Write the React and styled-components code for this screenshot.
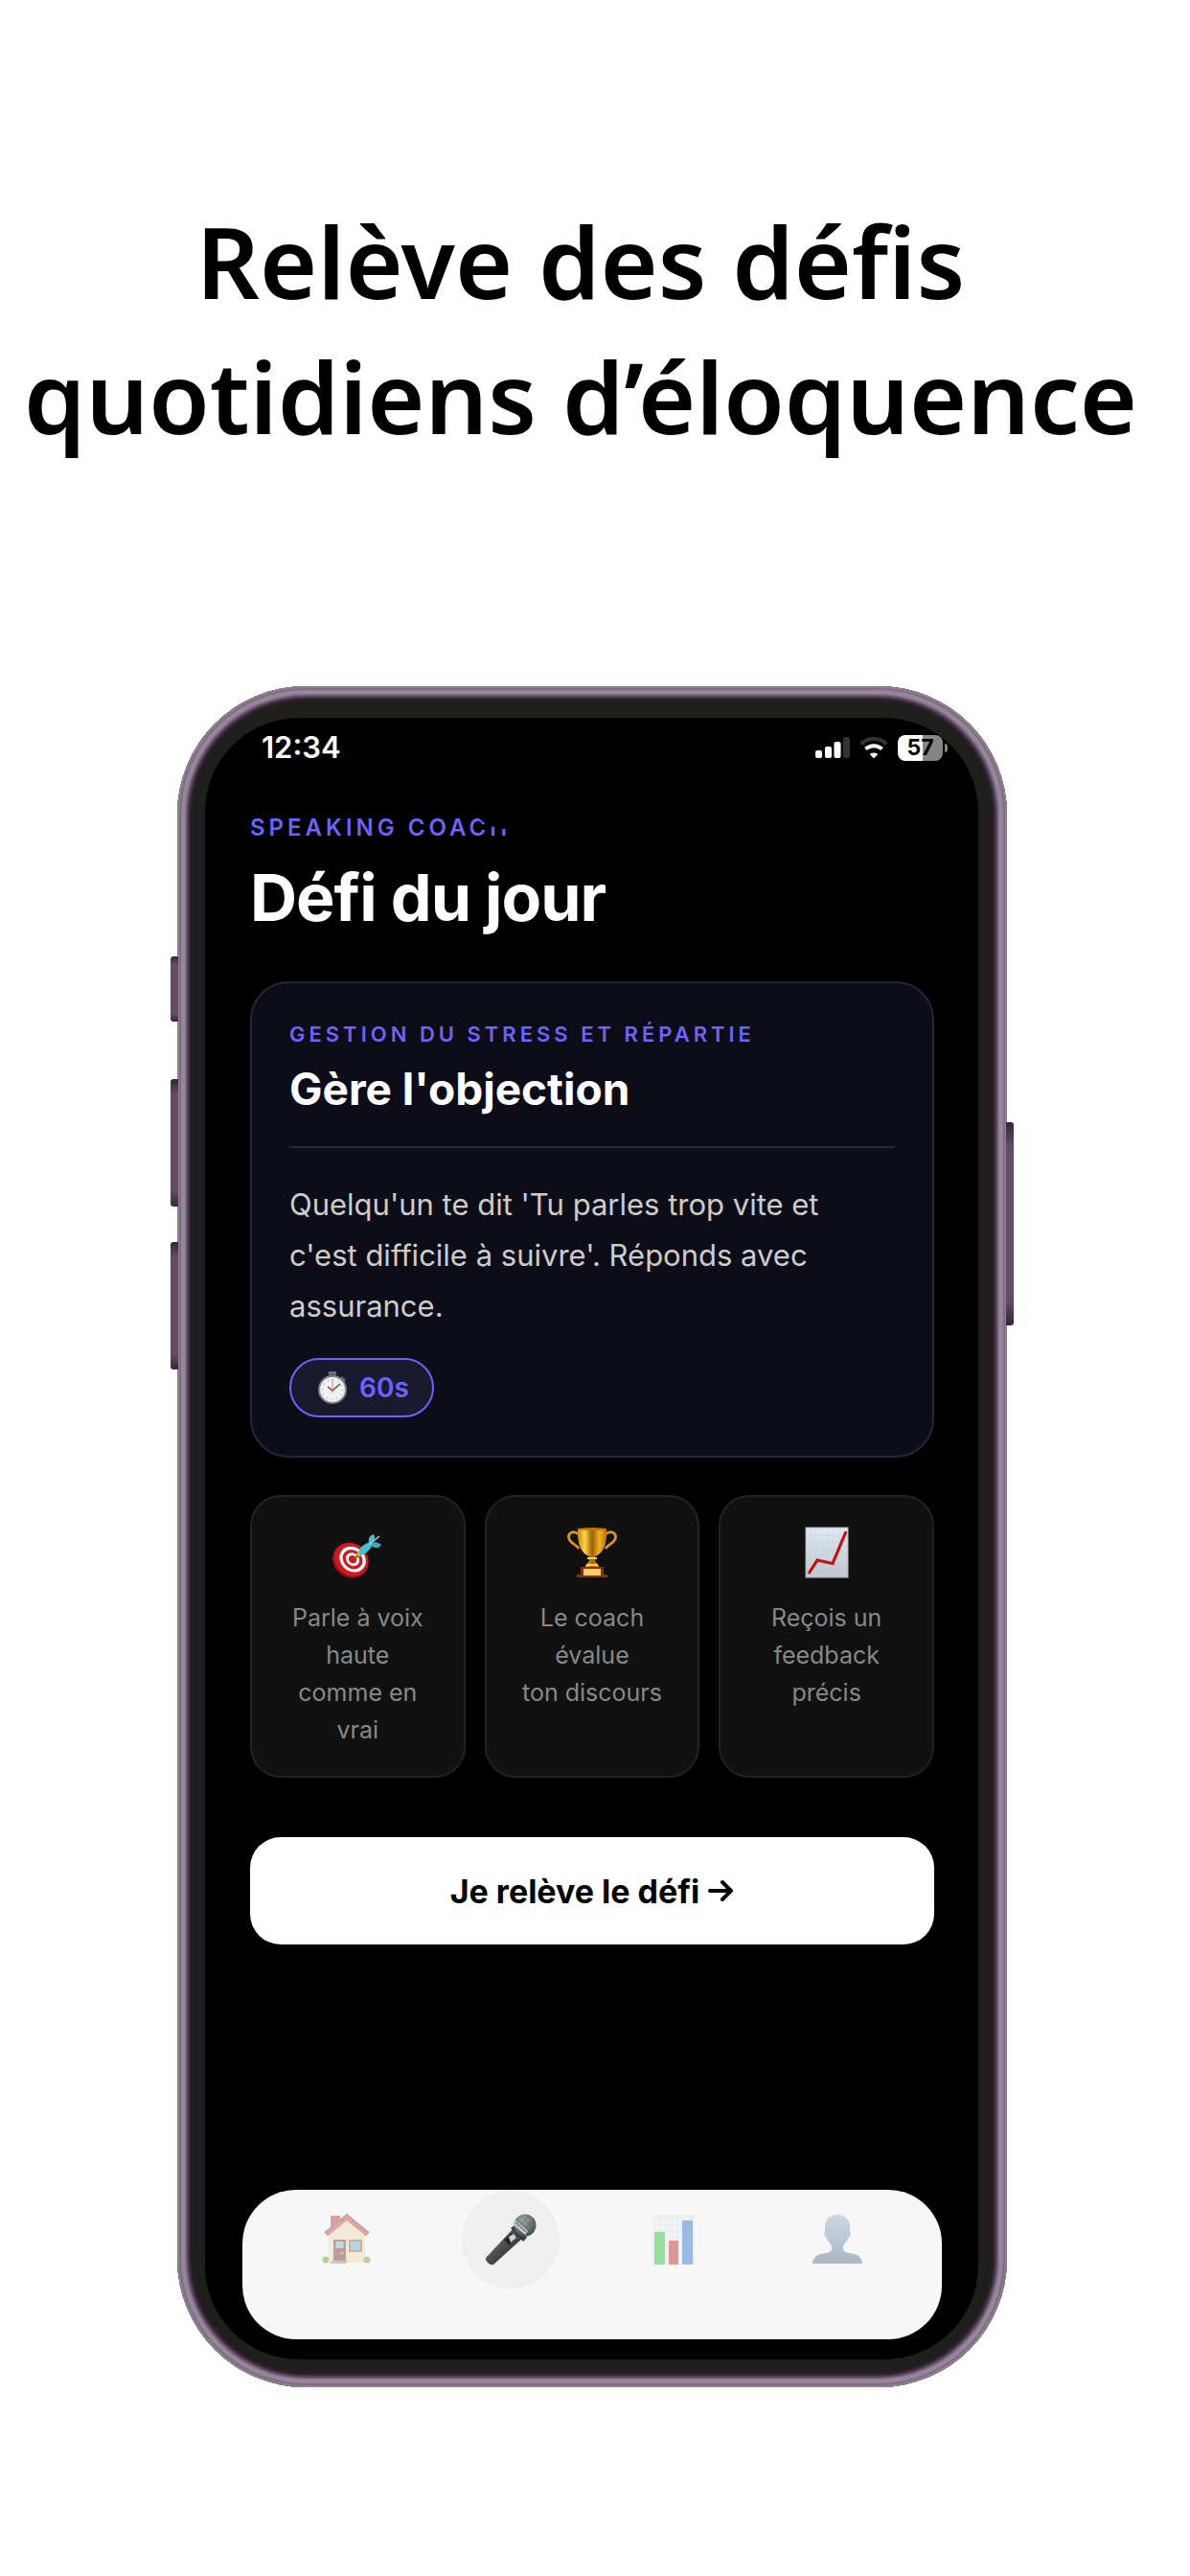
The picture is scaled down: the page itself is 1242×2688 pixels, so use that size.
import React, { useState } from "react";
import styled, { createGlobalStyle } from "styled-components";

const steps = [
  { id: "speak", icon: <TargetIcon />, lines: ["Parle à voix haute", "comme en vrai"] },
  { id: "coach", icon: <TrophyIcon />, lines: ["Le coach évalue", "ton discours"] },
  { id: "feedback", icon: <GrowthIcon />, lines: ["Reçois un feedback", "précis"] },
];

const tabs = [
  { id: "home", label: "Accueil", icon: <HouseIcon /> },
  { id: "challenge", label: "Défi", icon: <MicIcon /> },
  { id: "stats", label: "Statistiques", icon: <BarsIcon /> },
  { id: "profile", label: "Profil", icon: <PersonIcon /> },
];

const App = () => {
  const [activeTab, setActiveTab] = useState("challenge");

  return (
    <Page>
      <GlobalStyle />
      <Headline>
        Relève des défis
        <br />
        quotidiens d’éloquence
      </Headline>

      <Phone>
        <SideKey side="left" top={282} size={68} />
        <SideKey side="left" top={410} size={133} />
        <SideKey side="left" top={580} size={133} />
        <SideKey side="right" top={455} size={212} />

        <Screen>
          <Island />
          <StatusBar>
            <Clock>12:34</Clock>
            <StatusIcons>
              <SignalIcon />
              <WifiIcon />
              <Battery>
                <BatteryBody>57</BatteryBody>
                <BatteryNub />
              </Battery>
            </StatusIcons>
          </StatusBar>

          <Content>
            <Eyebrow>SPEAKING COACH</Eyebrow>
            <Title>Défi du jour</Title>

            <Card>
              <Category>GESTION DU STRESS ET RÉPARTIE</Category>
              <CardTitle>Gère l'objection</CardTitle>
              <Divider />
              <Prompt>
                Quelqu'un te dit 'Tu parles trop vite et c'est difficile à suivre'. Réponds avec
                assurance.
              </Prompt>
              <Duration>
                <StopwatchIcon />
                60s
              </Duration>
            </Card>

            <Steps>
              {steps.map((step) => (
                <Step key={step.id}>
                  {step.icon}
                  <StepText>
                    {step.lines[0]}
                    <br />
                    {step.lines[1]}
                  </StepText>
                </Step>
              ))}
            </Steps>

            <StartButton type="button">
              Je relève le défi
              <ArrowIcon />
            </StartButton>
          </Content>

          <TabBar>
            {tabs.map((tab) => (
              <TabSlot key={tab.id}>
                <Tab
                  type="button"
                  aria-label={tab.label}
                  $active={tab.id === activeTab}
                  onClick={() => setActiveTab(tab.id)}
                >
                  {tab.icon}
                </Tab>
              </TabSlot>
            ))}
          </TabBar>
        </Screen>
      </Phone>
    </Page>
  );
};

export default App;

function SideKey({ side, top, size }) {
  return <Key $side={side} $top={top} $size={size} />;
}

function SignalIcon() {
  return (
    <svg width="36" height="22" viewBox="0 0 36 22" fill="#fff">
      <rect x="0" y="14" width="7" height="8" rx="2" />
      <rect x="10" y="10" width="7" height="12" rx="2" />
      <rect x="19.500" y="5" width="7" height="17" rx="2" />
      <rect x="29" y="0" width="7" height="22" rx="2" fill="#333" />
    </svg>
  );
}

function WifiIcon() {
  return (
    <svg width="30" height="22" viewBox="0 0 30 22" fill="none" strokeWidth="4">
      <path d="M1.500 7.500C9 .300 21 .300 28.500 7.500" stroke="#333" />
      <path d="M6.500 12.500C11.500 8 18.500 8 23.500 12.500" stroke="#fff" />
      <path d="M15 22.500l-4.200-4.600c2.400-2 6-2 8.400 0z" fill="#fff" />
    </svg>
  );
}

function StopwatchIcon() {
  return (
    <svg width="32" height="36" viewBox="0 0 32 36">
      <rect x="12" y="1" width="8" height="4" rx="1" fill="#6d747b" />
      <rect x="14" y="4" width="4" height="4" fill="#41474e" />
      <path d="M26 6l4 4-2 2-4-4z" fill="#5d646c" />
      <circle cx="16" cy="20" r="15" fill="#7d858d" />
      <circle cx="16" cy="20" r="13" fill="#f1f1ef" />
      <circle cx="16" cy="20" r="10.500" fill="none" stroke="#aaa" strokeWidth="1.500" strokeDasharray="1 4.500" />
      <path d="M16 21V9" stroke="#e6917c" strokeWidth="1.200" />
      <path d="M11 17l5 4 8-7" fill="none" stroke="#50555b" strokeWidth="1.600" />
      <circle cx="16" cy="21" r="1.500" fill="#d9775f" />
    </svg>
  );
}

function ArrowIcon() {
  return (
    <svg width="28" height="26" viewBox="0 0 28 26" fill="none" stroke="#000" strokeWidth="4" strokeLinecap="round" strokeLinejoin="round">
      <path d="M3 13h22M16 4l9 9-9 9" />
    </svg>
  );
}

function TargetIcon() {
  return (
    <svg width="54" height="54" viewBox="0 0 54 54">
      <g transform="rotate(40 20 35)">
        <ellipse cx="20" cy="36" rx="19.500" ry="17" fill="#8f0d12" />
        <ellipse cx="20" cy="34" rx="19" ry="16.500" fill="#cf1820" />
        <ellipse cx="21" cy="33" rx="14.500" ry="12.500" fill="#fff" />
        <ellipse cx="21" cy="33" rx="11" ry="9.500" fill="#cf1820" />
        <ellipse cx="21" cy="33" rx="7.500" ry="6.500" fill="#fff" />
        <ellipse cx="21" cy="33" rx="4.500" ry="4" fill="#cf1820" />
      </g>
      <path d="M22 34l6-6 3 3z" fill="#8d6a12" />
      <path d="M26 29l3-4 4 4-4 2z" fill="#f2c81e" />
      <path d="M28 27c1-6 7-9 12-11l3 3c-3 5-7 10-13 11z" fill="#3cc3d6" />
      <path d="M39 17c-1-5 1-8 5-9 2 3 1 7-2 10z" fill="#58b9c6" />
      <path d="M41 18c3-3 8-2 11 1-2 4-7 4-11 1z" fill="#3fa6b5" />
      <path d="M39 19l11-9" stroke="#7cdbe6" strokeWidth="1.600" />
    </svg>
  );
}

function TrophyIcon() {
  return (
    <svg width="54" height="54" viewBox="0 0 54 54">
      <defs>
        <linearGradient id="cup" x1="0" x2="1">
          <stop offset="0" stopColor="#c78408" />
          <stop offset=".25" stopColor="#ffd34a" />
          <stop offset=".5" stopColor="#9a6204" />
          <stop offset=".75" stopColor="#f2b21c" />
          <stop offset="1" stopColor="#b87305" />
        </linearGradient>
      </defs>
      <path d="M13 8C7 3 1 7 3 13c2 5 8 6 10 10M41 8c6-5 12-1 10 5-2 5-8 6-10 10" fill="none" stroke="#d9981a" strokeWidth="2.800" />
      <path d="M12 2h30c1 15-3 26-12 29v5l4 5v3H20v-3l4-5v-5C15 28 11 17 12 2z" fill="url(#cup)" />
      <ellipse cx="27" cy="2.500" rx="15" ry="1.500" fill="#b97908" />
      <path d="M22 33h10M21 40h12" stroke="#ffd34a" strokeWidth="2" />
      <path d="M15 42h24v8h4v3H11v-3h4z" fill="#8a3206" />
      <rect x="18" y="44" width="18" height="7" fill="#f7cf62" />
    </svg>
  );
}

function GrowthIcon() {
  return (
    <svg width="54" height="54" viewBox="0 0 54 54">
      <defs>
        <linearGradient id="paper" x1="0" x2="0" y1="0" y2="1">
          <stop offset="0" stopColor="#dfe9f3" />
          <stop offset="1" stopColor="#bfc6cd" />
        </linearGradient>
      </defs>
      <rect x="5" y="1" width="44" height="52" fill="url(#paper)" stroke="#aab4bd" />
      <path d="M10 2v50M16 2v50M22 2v50M28 2v50M34 2v50M40 2v50M6 9h42M6 16h42M6 23h42M6 30h42M6 37h42M6 44h42" stroke="#c3d1de" strokeWidth=".500" />
      <path d="M8 49l9-14 16 3.500L47 5" fill="none" stroke="#c90d10" strokeWidth="3.200" />
    </svg>
  );
}

function HouseIcon() {
  return (
    <svg width="54" height="54" viewBox="0 0 54 54">
      <rect x="10" y="2" width="10" height="18" fill="#c4493f" />
      <path d="M8 22L27 6l19 16v29H8z" fill="#f3e0b8" />
      <path d="M4 20L27 1l23 19-3 3.500L27 7 7 23.500z" fill="#dc4b49" />
      <path d="M4 20L27 1l23 19" fill="none" stroke="#67686b" strokeWidth="2" />
      <rect x="13" y="27" width="13" height="23" fill="#7e4938" />
      <rect x="15.500" y="29" width="8" height="7" fill="#83bfe2" />
      <circle cx="22" cy="41" r="1.300" fill="#e8bd55" />
      <rect x="29" y="27" width="14" height="13" fill="#9b6f58" />
      <rect x="31" y="29" width="10" height="9" fill="#76b5df" />
      <circle cx="5" cy="48" r="3.500" fill="#7aa641" />
      <circle cx="48" cy="48" r="3.500" fill="#7aa641" />
      <path d="M11 49h16v3H9z" fill="#9a9a9a" />
    </svg>
  );
}

function MicIcon() {
  return (
    <svg width="54" height="54" viewBox="0 0 54 54">
      <defs>
        <linearGradient id="handle" x1="0" x2="1" y1="0" y2="1">
          <stop offset="0" stopColor="#7b7d7c" />
          <stop offset=".5" stopColor="#4b4c4c" />
          <stop offset="1" stopColor="#151515" />
        </linearGradient>
        <radialGradient id="grille" cx=".4" cy=".3" r=".8">
          <stop offset="0" stopColor="#a4aaa9" />
          <stop offset="1" stopColor="#3b4040" />
        </radialGradient>
      </defs>
      <path d="M1 46L30 15l10 10L9 53q-3 1-6-2t-2-5z" fill="url(#handle)" />
      <path d="M27 15l4-3 13 13-4 4z" fill="#3c3e3e" />
      <circle cx="42" cy="12" r="11.500" fill="url(#grille)" />
      <path d="M34 6l16 15M38 3l14 13M32 11l12 12M32 17L46 2M36 21L52 6M42 23l11-11" stroke="#5d6363" strokeWidth=".700" />
      <path d="M31 6l14 12-3 4-13-11z" fill="#c5cbd3" />
      <path d="M32 9l11 10" stroke="#747b85" strokeWidth="1.500" />
      <path d="M20 27l8-7 5 5-8 8z" fill="#262626" />
      <path d="M25 24l5-3 3 4-6 5z" fill="#cfcfcf" />
    </svg>
  );
}

function BarsIcon() {
  return (
    <svg width="54" height="54" viewBox="0 0 54 54">
      <rect x="5" y="1" width="44" height="52" fill="#dfe8ed" />
      <path d="M10 1v52M16 1v52M22 1v52M28 1v52M34 1v52M40 1v52M5 8h44M5 15h44M5 22h44M5 29h44M5 36h44M5 43h44" stroke="#f6f8fa" />
      <rect x="7" y="19" width="11" height="34" fill="#39cb46" />
      <rect x="22" y="28" width="10" height="25" fill="#cb393d" />
      <rect x="36" y="7" width="11" height="46" fill="#3b7fd0" />
    </svg>
  );
}

function PersonIcon() {
  return (
    <svg width="54" height="54" viewBox="0 0 54 54">
      <defs>
        <linearGradient id="bust" x1="0" x2="0" y1="0" y2="1">
          <stop offset="0" stopColor="#9bbace" />
          <stop offset="1" stopColor="#5e7a92" />
        </linearGradient>
      </defs>
      <path d="M27 1c8 0 13 5 13 12v5c2 2 0 6-2 8-2 4-4 5-5 8v3c1 4 7 4 12 5 5 2 8 5 8 10H1c0-5 3-8 8-10 5-1 11-1 12-5v-3c-1-3-3-4-5-8-2-2-4-6-2-8v-5C14 6 19 1 27 1z" fill="url(#bust)" />
    </svg>
  );
}

const GlobalStyle = createGlobalStyle`
  *, *::before, *::after {
    box-sizing: border-box;
  }
  body {
    margin: 0;
    background: #fff;
    font-family: Inter, "Liberation Sans", sans-serif;
  }
  h1, h2, h3, p {
    margin: 0;
  }
  svg {
    flex-shrink: 0;
  }
`;

const Page = styled.main`
  display: flex;
  flex-direction: column;
  align-items: center;
  gap: 232px;
  padding: 202px 6px 197px 0;
`;

const Headline = styled.h1`
  font-family: "Noto Sans", "Open Sans", sans-serif;
  font-size: 103px;
  line-height: 141px;
  font-weight: 600;
  color: #000;
  text-align: center;
  white-space: nowrap;
  margin-right: 24px;
`;

const Phone = styled.section`
  position: relative;
  display: flex;
  width: 72%;
  max-width: 866px;
  min-height: 1775px;
  padding: 33px 30px 29px 29px;
  border-radius: 134px;
  background: #1f1f1b;
  box-shadow: inset 0 0 0 2px #8d808f, inset 0 0 1px 4px #7e6c81,
    inset 0 0 2px 9px #98869c, inset 0 0 3px 12px #65506a,
    inset 0 0 4px 15px #2b202c;
`;

const Key = styled.span`
  position: absolute;
  top: ${({ $top }) => $top}px;
  ${({ $side }) => $side}: -7px;
  width: 8px;
  height: ${({ $size }) => $size}px;
  border-radius: ${({ $side }) => ($side === "left" ? "3px 0 0 3px" : "0 3px 3px 0")};
  background: linear-gradient(#35243a, #634c64 12%, #634c64 88%, #35243a);
`;

const Screen = styled.div`
  position: relative;
  display: flex;
  flex-direction: column;
  flex: 1;
  border-radius: 98px;
  background: #000;
`;

const Island = styled.div`
  position: absolute;
  top: 44px;
  left: 50%;
  width: 256px;
  height: 72px;
  margin-left: -128px;
  border-radius: 36px;
  background: #000;
`;

const StatusBar = styled.header`
  display: flex;
  align-items: center;
  justify-content: space-between;
  height: 62px;
  padding: 0 32px 0 59px;
  color: #fff;
`;

const Clock = styled.time`
  font-size: 31px;
  line-height: 36px;
  font-weight: 600;
`;

const StatusIcons = styled.div`
  display: flex;
  align-items: center;
  gap: 10px;
`;

const Battery = styled.div`
  display: flex;
  align-items: center;
  gap: 2px;
`;

const BatteryBody = styled.span`
  width: 47px;
  height: 27px;
  border-radius: 8px;
  background: linear-gradient(90deg, #fff 56%, #858585 56%);
  color: #000;
  font-size: 23px;
  line-height: 27px;
  font-weight: 700;
  text-align: center;
`;

const BatteryNub = styled.span`
  width: 3px;
  height: 9px;
  border-radius: 0 3px 3px 0;
  background: #858585;
`;

const Content = styled.div`
  display: flex;
  flex-direction: column;
  padding: 39px 46px 0 47px;
`;

const Eyebrow = styled.p`
  font-size: 24px;
  line-height: 28px;
  font-weight: 600;
  letter-spacing: 4px;
  color: #6c63ff;
`;

const Title = styled.h2`
  margin-top: 18px;
  font-size: 68px;
  line-height: 80px;
  font-weight: 700;
  letter-spacing: -1px;
  color: #fff;
`;

const Card = styled.article`
  display: flex;
  flex-direction: column;
  margin-top: 48px;
  padding: 40px 39px;
  border: 2px solid #262540;
  border-radius: 40px;
  background: #0d0d18;
`;

const Category = styled.p`
  font-size: 22px;
  line-height: 26px;
  font-weight: 600;
  letter-spacing: 4px;
  color: #6c63ff;
`;

const CardTitle = styled.h3`
  margin-top: 16px;
  font-size: 46px;
  line-height: 56px;
  font-weight: 700;
  color: #fff;
`;

const Divider = styled.hr`
  width: 100%;
  margin: 32px 0;
  border: 0;
  border-top: 2px solid #262540;
`;

const Prompt = styled.p`
  padding-right: 24px;
  font-size: 31px;
  line-height: 53px;
  color: #ccc;
`;

const Duration = styled.span`
  display: flex;
  align-items: center;
  align-self: flex-start;
  gap: 12px;
  height: 62px;
  margin-top: 28px;
  padding: 0 24px 0 27px;
  border: 2px solid #6c63ff;
  border-radius: 31px;
  background: #1a1a2e;
  color: #6c63ff;
  font-size: 28px;
  font-weight: 600;
`;

const Steps = styled.div`
  display: grid;
  grid-template-columns: repeat(3, 1fr);
  gap: 20px;
  margin-top: 39px;
`;

const Step = styled.div`
  display: flex;
  flex-direction: column;
  align-items: center;
  gap: 22px;
  padding: 31px 28px 28px;
  border: 2px solid #222;
  border-radius: 32px;
  background: #111;
`;

const StepText = styled.p`
  font-size: 25px;
  line-height: 39px;
  color: #888;
  text-align: center;
`;

const StartButton = styled.button`
  display: flex;
  align-items: center;
  justify-content: center;
  gap: 8px;
  height: 112px;
  margin-top: 62px;
  border: 0;
  border-radius: 32px;
  background: #fff;
  color: #000;
  font-family: inherit;
  font-size: 34px;
  font-weight: 700;
`;

const TabBar = styled.nav`
  display: flex;
  height: 156px;
  margin: auto 38px 21px 39px;
  padding: 1px 24px;
  border-radius: 56px;
  background: #f7f7f7;
`;

const TabSlot = styled.div`
  display: flex;
  flex: 1;
  justify-content: center;
`;

const Tab = styled.button`
  display: flex;
  align-items: center;
  justify-content: center;
  width: 102px;
  height: 102px;
  padding: 0;
  border: 0;
  border-radius: 50%;
  background: ${({ $active }) => ($active ? "#efefef" : "transparent")};

  svg {
    opacity: ${({ $active }) => ($active ? 1 : 0.5)};
  }
`;
